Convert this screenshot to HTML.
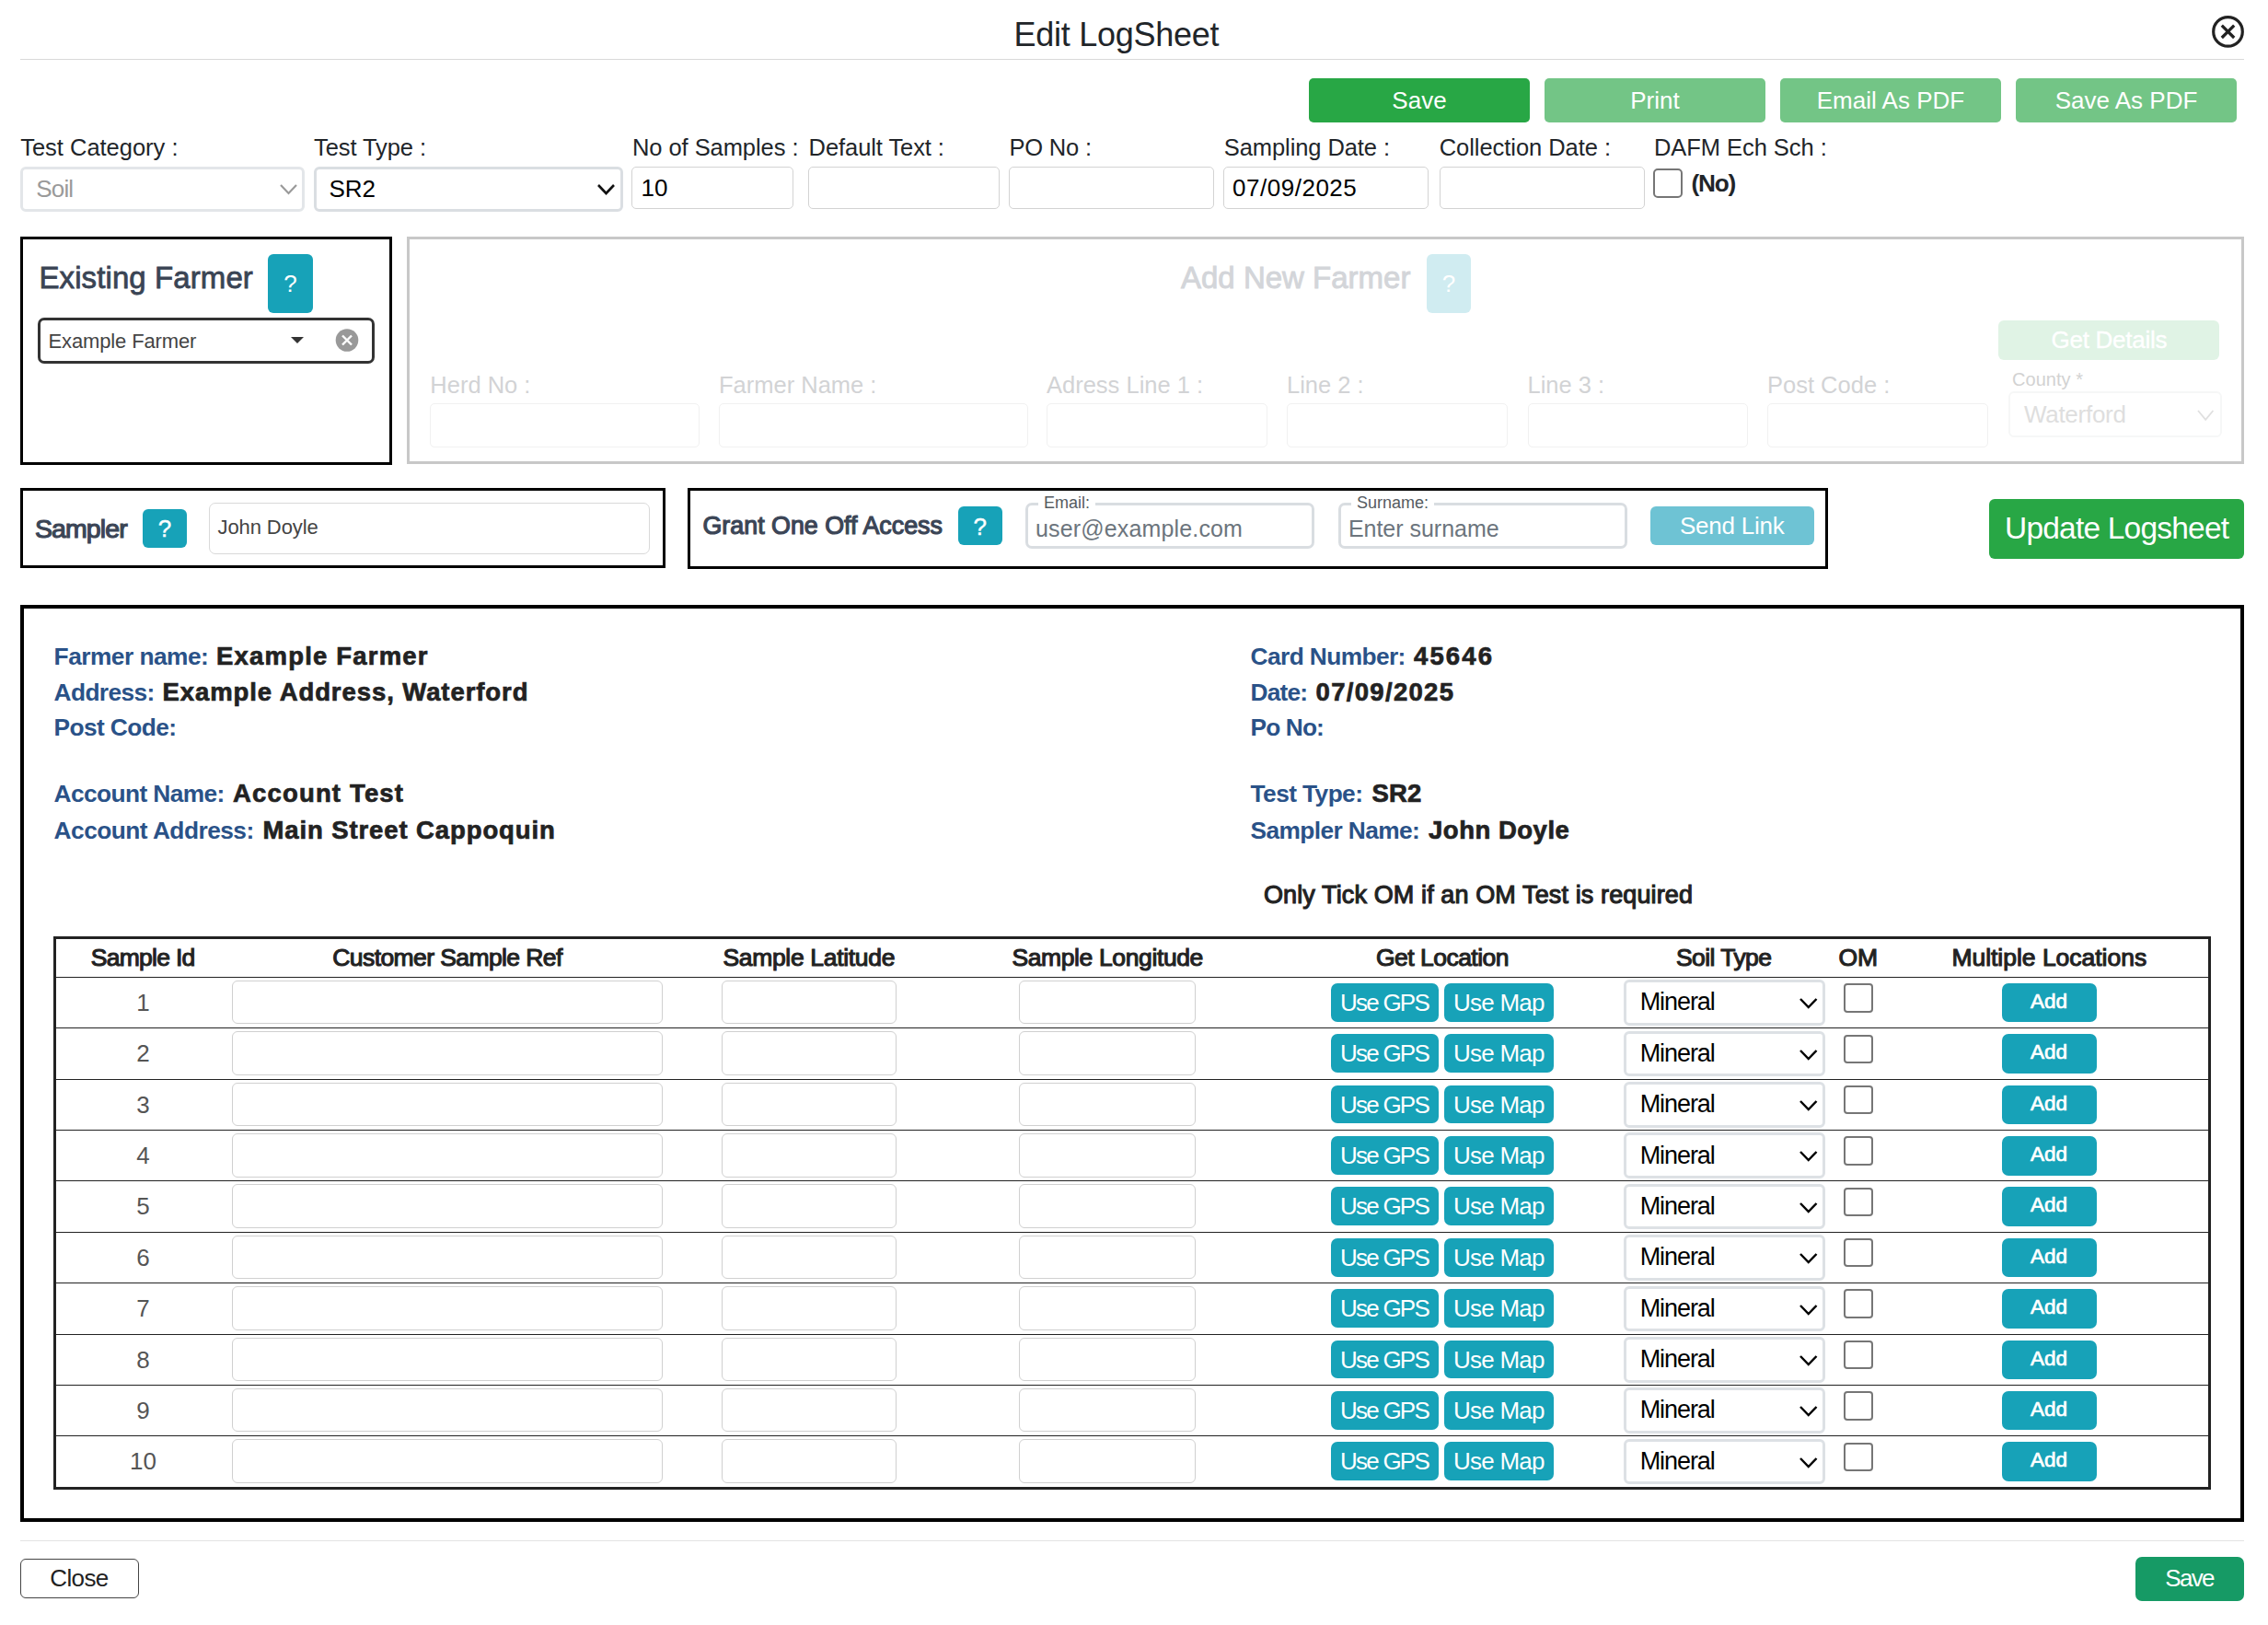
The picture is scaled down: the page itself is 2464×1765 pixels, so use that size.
<!DOCTYPE html>
<html><head><meta charset="utf-8"><title>Edit LogSheet</title>
<style>
html,body{margin:0;padding:0;background:#fff;width:2464px;height:1765px;overflow:hidden;position:relative}
body{font-family:"Liberation Sans",sans-serif}
.t{position:absolute;line-height:1;white-space:nowrap}
.b{position:absolute;box-sizing:border-box}
</style></head><body>
<div class="t" style="left:1101.40px;top:19.53px;font-size:36px;color:#212529;letter-spacing:-0.255px;">Edit LogSheet</div>
<svg class="b" style="left:2400px;top:14px" width="41" height="41"><circle cx="20.5" cy="20.4" r="15.8" fill="none" stroke="#222" stroke-width="3.2"/><path d="M13.8 13.6 L27.2 27.0 M27.2 13.6 L13.8 27.0" stroke="#222" stroke-width="3.2"/></svg>
<div class="b" style="left:22.00px;top:64.00px;width:2416.00px;height:1.00px;background:#d9d9d9;"></div>
<div class="b" style="left:1422.00px;top:85.00px;width:240.00px;height:48.00px;background:#28a745;border-radius:5px;"></div>
<div class="t" style="left:1512.36px;top:95.99px;font-size:26px;color:#fff;">Save</div>
<div class="b" style="left:1678.00px;top:85.00px;width:240.00px;height:48.00px;background:#73c586;border-radius:5px;"></div>
<div class="t" style="left:1771.29px;top:95.99px;font-size:26px;color:#fff;">Print</div>
<div class="b" style="left:1934.00px;top:85.00px;width:240.00px;height:48.00px;background:#73c586;border-radius:5px;"></div>
<div class="t" style="left:1973.79px;top:95.99px;font-size:26px;color:#fff;">Email As PDF</div>
<div class="b" style="left:2190.00px;top:85.00px;width:240.00px;height:48.00px;background:#73c586;border-radius:5px;"></div>
<div class="t" style="left:2232.72px;top:95.99px;font-size:26px;color:#fff;">Save As PDF</div>
<div class="t" style="left:22.20px;top:147.91px;font-size:25.5px;color:#212529;letter-spacing:-0.013px;">Test Category :</div>
<div class="t" style="left:341.00px;top:147.91px;font-size:25.5px;color:#212529;letter-spacing:-0.078px;">Test Type :</div>
<div class="t" style="left:687.00px;top:147.91px;font-size:25.5px;color:#212529;letter-spacing:-0.067px;">No of Samples :</div>
<div class="t" style="left:878.60px;top:147.91px;font-size:25.5px;color:#212529;letter-spacing:-0.078px;">Default Text :</div>
<div class="t" style="left:1096.50px;top:147.91px;font-size:25.5px;color:#212529;letter-spacing:-0.192px;">PO No :</div>
<div class="t" style="left:1329.80px;top:147.91px;font-size:25.5px;color:#212529;letter-spacing:-0.088px;">Sampling Date :</div>
<div class="t" style="left:1563.70px;top:147.91px;font-size:25.5px;color:#212529;letter-spacing:-0.046px;">Collection Date :</div>
<div class="t" style="left:1797.00px;top:147.91px;font-size:25.5px;color:#212529;letter-spacing:-0.057px;">DAFM Ech Sch :</div>
<div class="b" style="left:22.00px;top:181.00px;width:309.00px;height:49.00px;border:3px solid #e3e6e9;background:#fff;border-radius:6px;"></div>
<div class="t" style="left:39.20px;top:191.99px;font-size:26px;color:#9a9a9a;letter-spacing:-0.807px;">Soil</div>
<svg class="b" style="left:302.50px;top:199.00px" width="21.00" height="13.00"><polyline points="2,2 10.50,11.00 19.00,2" fill="none" stroke="#9a9a9a" stroke-width="2.2"/></svg>
<div class="b" style="left:341.00px;top:181.00px;width:335.50px;height:49.00px;border:3px solid #dadee2;background:#fff;border-radius:6px;"></div>
<div class="t" style="left:357.40px;top:191.99px;font-size:26px;color:#000;">SR2</div>
<svg class="b" style="left:648.40px;top:199.00px" width="21.00" height="13.00"><polyline points="2,2 10.50,11.00 19.00,2" fill="none" stroke="#111" stroke-width="2.6"/></svg>
<div class="b" style="left:686.00px;top:180.60px;width:176.00px;height:46.40px;border:1.2px solid #d3d3d3;background:#fff;border-radius:5px;"></div>
<div class="b" style="left:878.00px;top:180.60px;width:208.00px;height:46.40px;border:1.2px solid #d3d3d3;background:#fff;border-radius:5px;"></div>
<div class="b" style="left:1096.00px;top:180.60px;width:223.00px;height:46.40px;border:1.2px solid #d3d3d3;background:#fff;border-radius:5px;"></div>
<div class="b" style="left:1329.00px;top:180.60px;width:223.00px;height:46.40px;border:1.2px solid #d3d3d3;background:#fff;border-radius:5px;"></div>
<div class="b" style="left:1564.00px;top:180.60px;width:223.00px;height:46.40px;border:1.2px solid #d3d3d3;background:#fff;border-radius:5px;"></div>
<div class="t" style="left:696.50px;top:191.19px;font-size:26px;color:#000;">10</div>
<div class="t" style="left:1339.00px;top:191.19px;font-size:26px;color:#000;letter-spacing:0.519px;">07/09/2025</div>
<div class="b" style="left:1796.00px;top:183.00px;width:32.00px;height:32.00px;border:2px solid #767676;background:#fff;border-radius:5px;"></div>
<div class="t" style="left:1837.40px;top:185.62px;font-size:26.2px;color:#212529;font-weight:700;letter-spacing:-1.167px;">(No)</div>
<div class="b" style="left:22.00px;top:257.00px;width:404.00px;height:248.00px;border:3px solid #000;"></div>
<div class="t" style="left:42.50px;top:284.87px;font-size:33px;color:#3a4454;letter-spacing:0.093px;-webkit-text-stroke:0.8px #3a4454;">Existing Farmer</div>
<div class="b" style="left:291.00px;top:276.00px;width:49.00px;height:63.60px;background:#17a2b8;border-radius:6px;"></div>
<div class="t" style="left:308.29px;top:294.99px;font-size:26px;color:#fff;">?</div>
<div class="b" style="left:41.30px;top:345.00px;width:365.40px;height:50.00px;border:3px solid #333;background:#fff;border-radius:7px;"></div>
<div class="t" style="left:52.60px;top:360.38px;font-size:22px;color:#444;letter-spacing:-0.145px;">Example Farmer</div>
<svg class="b" style="left:315px;top:365px" width="16" height="10"><path d="M1 1 L15 1 L8 8 Z" fill="#333"/></svg>
<svg class="b" style="left:364px;top:357px" width="26" height="26"><circle cx="13" cy="12.5" r="12.3" fill="#999"/><path d="M8 7.5 L18 17.5 M18 7.5 L8 17.5" stroke="#fff" stroke-width="2.4"/></svg>
<div class="b" style="left:442.00px;top:257.00px;width:1996.00px;height:247.00px;border:3px solid #c8c8c8;"></div>
<div class="t" style="left:1283.00px;top:284.87px;font-size:33px;color:#d3d5d9;-webkit-text-stroke:0.9px #d3d5d9;">Add New Farmer</div>
<div class="b" style="left:1550.00px;top:276.00px;width:48.00px;height:64.00px;background:#d0ecf1;border-radius:6px;"></div>
<div class="t" style="left:1566.79px;top:294.99px;font-size:26px;color:#fff;">?</div>
<div class="b" style="left:2171.00px;top:348.00px;width:240.00px;height:43.00px;background:#e0f3e5;border-radius:6px;"></div>
<div class="t" style="left:2228.50px;top:355.99px;font-size:26px;color:#fff;letter-spacing:-0.267px;-webkit-text-stroke:0.4px #fff;">Get Details</div>
<div class="t" style="left:467.30px;top:406.41px;font-size:25.5px;color:#d2d3d5;">Herd No :</div>
<div class="b" style="left:467.00px;top:438.00px;width:293.00px;height:47.50px;border:1.2px solid #f1f1f1;border-radius:5px;"></div>
<div class="t" style="left:781.00px;top:406.41px;font-size:25.5px;color:#d2d3d5;">Farmer Name :</div>
<div class="b" style="left:781.00px;top:438.00px;width:336.00px;height:47.50px;border:1.2px solid #f1f1f1;border-radius:5px;"></div>
<div class="t" style="left:1137.00px;top:406.41px;font-size:25.5px;color:#d2d3d5;">Adress Line 1 :</div>
<div class="b" style="left:1137.00px;top:438.00px;width:240.00px;height:47.50px;border:1.2px solid #f1f1f1;border-radius:5px;"></div>
<div class="t" style="left:1398.00px;top:406.41px;font-size:25.5px;color:#d2d3d5;">Line 2 :</div>
<div class="b" style="left:1398.00px;top:438.00px;width:240.00px;height:47.50px;border:1.2px solid #f1f1f1;border-radius:5px;"></div>
<div class="t" style="left:1659.50px;top:406.41px;font-size:25.5px;color:#d2d3d5;">Line 3 :</div>
<div class="b" style="left:1659.50px;top:438.00px;width:239.50px;height:47.50px;border:1.2px solid #f1f1f1;border-radius:5px;"></div>
<div class="t" style="left:1920.00px;top:406.41px;font-size:25.5px;color:#d2d3d5;">Post Code :</div>
<div class="b" style="left:1920.00px;top:438.00px;width:240.00px;height:47.50px;border:1.2px solid #f1f1f1;border-radius:5px;"></div>
<div class="t" style="left:2186.00px;top:402.27px;font-size:20px;color:#d2d2d2;letter-spacing:0.043px;">County *</div>
<div class="b" style="left:2181.50px;top:425.00px;width:232.20px;height:50.00px;border:2.4px solid #f6f7f7;border-radius:6px;"></div>
<div class="t" style="left:2198.90px;top:437.09px;font-size:26px;color:#dedede;letter-spacing:-0.266px;">Waterford</div>
<svg class="b" style="left:2385.80px;top:443.50px" width="20.40" height="13.90"><polyline points="2,2 10.20,11.90 18.40,2" fill="none" stroke="#e0e0e0" stroke-width="1.8"/></svg>
<div class="b" style="left:22.00px;top:530.00px;width:701.00px;height:87.00px;border:3px solid #000;"></div>
<div class="t" style="left:38.00px;top:560.47px;font-size:28.5px;color:#3b4556;letter-spacing:-0.910px;-webkit-text-stroke:1.2px #3b4556;">Sampler</div>
<div class="b" style="left:155.00px;top:552.60px;width:48.00px;height:42.40px;background:#17a2b8;border-radius:6px;"></div>
<div class="t" style="left:171.78px;top:560.99px;font-size:26px;color:#fff;-webkit-text-stroke:0.4px #fff;">?</div>
<div class="b" style="left:227.40px;top:546.00px;width:478.60px;height:55.60px;border:1.2px solid #d9d9d9;background:#fff;border-radius:7px;"></div>
<div class="t" style="left:236.50px;top:562.38px;font-size:22px;color:#444;letter-spacing:-0.090px;">John Doyle</div>
<div class="b" style="left:747.00px;top:530.00px;width:1238.50px;height:87.50px;border:3px solid #000;"></div>
<div class="t" style="left:763.50px;top:558.31px;font-size:26.8px;color:#3b4556;letter-spacing:0.014px;-webkit-text-stroke:1.2px #3b4556;">Grant One Off Access</div>
<div class="b" style="left:1041.00px;top:550.00px;width:47.50px;height:42.40px;background:#17a2b8;border-radius:6px;"></div>
<div class="t" style="left:1057.49px;top:558.99px;font-size:26px;color:#fff;-webkit-text-stroke:0.4px #fff;">?</div>
<div class="b" style="left:1113.60px;top:546.30px;width:314.80px;height:50.10px;border:3px solid #d9dde1;background:#fff;border-radius:7px;"></div>
<div class="b" style="left:1128.00px;top:540.00px;width:62.04px;height:12.00px;background:#fff;"></div>
<div class="t" style="left:1134.00px;top:536.76px;font-size:18px;color:#555b61;">Email:</div>
<div class="t" style="left:1125.00px;top:562.44px;font-size:25px;color:#6c757d;letter-spacing:0.150px;">user@example.com</div>
<div class="b" style="left:1453.50px;top:546.30px;width:314.50px;height:50.10px;border:3px solid #d9dde1;background:#fff;border-radius:7px;"></div>
<div class="b" style="left:1468.00px;top:540.00px;width:90.03px;height:12.00px;background:#fff;"></div>
<div class="t" style="left:1474.00px;top:536.76px;font-size:18px;color:#555b61;">Surname:</div>
<div class="t" style="left:1464.90px;top:562.44px;font-size:25px;color:#6c757d;letter-spacing:-0.017px;">Enter surname</div>
<div class="b" style="left:1793.00px;top:550.00px;width:177.50px;height:42.00px;background:#6ec3d4;border-radius:6px;"></div>
<div class="t" style="left:1825.00px;top:557.99px;font-size:26px;color:#fff;letter-spacing:-0.241px;">Send Link</div>
<div class="b" style="left:2161.00px;top:542.00px;width:277.00px;height:65.00px;background:#28a745;border-radius:6px;"></div>
<div class="t" style="left:2178.00px;top:557.14px;font-size:33.5px;color:#fff;letter-spacing:-0.793px;">Update Logsheet</div>
<div class="b" style="left:22.00px;top:657.00px;width:2416.00px;height:996.00px;border:4px solid #000;"></div>
<div class="t" style="left:58.60px;top:700.44px;font-size:26.3px;color:#2a5288;font-weight:700;letter-spacing:-0.516px;">Farmer name:</div>
<div class="t" style="left:235.00px;top:699.42px;font-size:27.5px;color:#222;font-weight:700;letter-spacing:1.196px;-webkit-text-stroke:0.7px #222;">Example Farmer</div>
<div class="t" style="left:1358.60px;top:700.44px;font-size:26.3px;color:#2a5288;font-weight:700;letter-spacing:-0.602px;">Card Number:</div>
<div class="t" style="left:1536.00px;top:699.42px;font-size:27.5px;color:#222;font-weight:700;letter-spacing:2.137px;-webkit-text-stroke:0.7px #222;">45646</div>
<div class="t" style="left:58.60px;top:738.74px;font-size:26.3px;color:#2a5288;font-weight:700;letter-spacing:-0.630px;">Address:</div>
<div class="t" style="left:176.50px;top:737.72px;font-size:27.5px;color:#222;font-weight:700;letter-spacing:0.925px;-webkit-text-stroke:0.7px #222;">Example Address, Waterford</div>
<div class="t" style="left:1358.60px;top:738.74px;font-size:26.3px;color:#2a5288;font-weight:700;letter-spacing:-0.837px;">Date:</div>
<div class="t" style="left:1429.60px;top:737.72px;font-size:27.5px;color:#222;font-weight:700;letter-spacing:1.307px;-webkit-text-stroke:0.7px #222;">07/09/2025</div>
<div class="t" style="left:58.60px;top:777.34px;font-size:26.3px;color:#2a5288;font-weight:700;letter-spacing:-0.607px;">Post Code:</div>
<div class="t" style="left:1358.60px;top:777.34px;font-size:26.3px;color:#2a5288;font-weight:700;letter-spacing:-0.897px;">Po No:</div>
<div class="t" style="left:58.60px;top:849.24px;font-size:26.3px;color:#2a5288;font-weight:700;letter-spacing:-0.593px;">Account Name:</div>
<div class="t" style="left:253.00px;top:848.22px;font-size:27.5px;color:#222;font-weight:700;letter-spacing:1.168px;-webkit-text-stroke:0.7px #222;">Account Test</div>
<div class="t" style="left:1358.60px;top:849.24px;font-size:26.3px;color:#2a5288;font-weight:700;letter-spacing:-0.587px;">Test Type:</div>
<div class="t" style="left:1490.40px;top:848.22px;font-size:27.5px;color:#222;font-weight:700;letter-spacing:0.256px;-webkit-text-stroke:0.7px #222;">SR2</div>
<div class="t" style="left:58.60px;top:888.74px;font-size:26.3px;color:#2a5288;font-weight:700;letter-spacing:-0.528px;">Account Address:</div>
<div class="t" style="left:285.50px;top:887.72px;font-size:27.5px;color:#222;font-weight:700;letter-spacing:0.891px;-webkit-text-stroke:0.7px #222;">Main Street Cappoquin</div>
<div class="t" style="left:1358.60px;top:888.74px;font-size:26.3px;color:#2a5288;font-weight:700;letter-spacing:-0.605px;">Sampler Name:</div>
<div class="t" style="left:1552.00px;top:887.72px;font-size:27.5px;color:#222;font-weight:700;letter-spacing:0.519px;-webkit-text-stroke:0.7px #222;">John Doyle</div>
<div class="t" style="left:1373.00px;top:959.14px;font-size:27px;color:#222;letter-spacing:0.116px;-webkit-text-stroke:1.1px #222;">Only Tick OM if an OM Test is required</div>
<div class="b" style="left:58.00px;top:1017.00px;width:2344.00px;height:601.00px;border:3px solid #222;"></div>
<div class="t" style="left:98.70px;top:1026.57px;font-size:26.5px;color:#222;letter-spacing:-0.710px;-webkit-text-stroke:1.1px #222;">Sample Id</div>
<div class="t" style="left:361.30px;top:1026.57px;font-size:26.5px;color:#222;letter-spacing:-0.592px;-webkit-text-stroke:1.1px #222;">Customer Sample Ref</div>
<div class="t" style="left:785.40px;top:1026.57px;font-size:26.5px;color:#222;letter-spacing:-0.319px;-webkit-text-stroke:1.1px #222;">Sample Latitude</div>
<div class="t" style="left:1099.40px;top:1026.57px;font-size:26.5px;color:#222;letter-spacing:-0.379px;-webkit-text-stroke:1.1px #222;">Sample Longitude</div>
<div class="t" style="left:1495.00px;top:1026.57px;font-size:26.5px;color:#222;letter-spacing:-0.523px;-webkit-text-stroke:1.1px #222;">Get Location</div>
<div class="t" style="left:1821.00px;top:1026.57px;font-size:26.5px;color:#222;letter-spacing:-0.565px;-webkit-text-stroke:1.1px #222;">Soil Type</div>
<div class="t" style="left:1997.42px;top:1026.57px;font-size:26.5px;color:#222;-webkit-text-stroke:1.1px #222;">OM</div>
<div class="t" style="left:2120.40px;top:1026.57px;font-size:26.5px;color:#222;letter-spacing:-0.020px;-webkit-text-stroke:1.1px #222;">Multiple Locations</div>
<div class="b" style="left:61.00px;top:1061.00px;width:2338.00px;height:1.00px;background:#222;"></div>
<div class="t" style="left:148.28px;top:1075.99px;font-size:26px;color:#555;">1</div>
<div class="b" style="left:252.00px;top:1065.00px;width:468.00px;height:47.40px;border:1.2px solid #d0d0d0;background:#fff;border-radius:6px;"></div>
<div class="b" style="left:783.50px;top:1065.00px;width:190.80px;height:47.40px;border:1.2px solid #d0d0d0;background:#fff;border-radius:6px;"></div>
<div class="b" style="left:1107.30px;top:1065.00px;width:191.40px;height:47.40px;border:1.2px solid #d0d0d0;background:#fff;border-radius:6px;"></div>
<div class="b" style="left:1446.00px;top:1068.00px;width:116.80px;height:41.70px;background:#17a2b8;border-radius:7px;"></div>
<div class="t" style="left:1456.00px;top:1075.99px;font-size:26px;color:#fff;letter-spacing:-1.770px;">Use GPS</div>
<div class="b" style="left:1569.00px;top:1068.00px;width:118.80px;height:41.70px;background:#17a2b8;border-radius:7px;"></div>
<div class="t" style="left:1579.00px;top:1075.99px;font-size:26px;color:#fff;letter-spacing:-0.750px;">Use Map</div>
<div class="b" style="left:1764.30px;top:1064.30px;width:218.50px;height:49.70px;border:3px solid #dde1e5;background:#fff;border-radius:6px;"></div>
<div class="t" style="left:1781.70px;top:1075.44px;font-size:27px;color:#000;letter-spacing:-1.077px;">Mineral</div>
<svg class="b" style="left:1954.00px;top:1083.30px" width="21.50" height="13.00"><polyline points="2,2 10.75,11.00 19.50,2" fill="none" stroke="#000" stroke-width="2.5"/></svg>
<div class="b" style="left:2003.30px;top:1068.20px;width:31.40px;height:31.40px;border:2px solid #767676;background:#fff;border-radius:4px;"></div>
<div class="b" style="left:2175.00px;top:1068.00px;width:102.80px;height:42.40px;background:#17a2b8;border-radius:7px;"></div>
<div class="t" style="left:2205.97px;top:1076.95px;font-size:22.5px;color:#fff;-webkit-text-stroke:0.7px #fff;">Add</div>
<div class="b" style="left:61.00px;top:1116.00px;width:2338.00px;height:1.00px;background:#222;"></div>
<div class="t" style="left:148.28px;top:1131.36px;font-size:26px;color:#555;">2</div>
<div class="b" style="left:252.00px;top:1120.37px;width:468.00px;height:47.40px;border:1.2px solid #d0d0d0;background:#fff;border-radius:6px;"></div>
<div class="b" style="left:783.50px;top:1120.37px;width:190.80px;height:47.40px;border:1.2px solid #d0d0d0;background:#fff;border-radius:6px;"></div>
<div class="b" style="left:1107.30px;top:1120.37px;width:191.40px;height:47.40px;border:1.2px solid #d0d0d0;background:#fff;border-radius:6px;"></div>
<div class="b" style="left:1446.00px;top:1123.37px;width:116.80px;height:41.70px;background:#17a2b8;border-radius:7px;"></div>
<div class="t" style="left:1456.00px;top:1131.36px;font-size:26px;color:#fff;letter-spacing:-1.770px;">Use GPS</div>
<div class="b" style="left:1569.00px;top:1123.37px;width:118.80px;height:41.70px;background:#17a2b8;border-radius:7px;"></div>
<div class="t" style="left:1579.00px;top:1131.36px;font-size:26px;color:#fff;letter-spacing:-0.750px;">Use Map</div>
<div class="b" style="left:1764.30px;top:1119.67px;width:218.50px;height:49.70px;border:3px solid #dde1e5;background:#fff;border-radius:6px;"></div>
<div class="t" style="left:1781.70px;top:1130.81px;font-size:27px;color:#000;letter-spacing:-1.077px;">Mineral</div>
<svg class="b" style="left:1954.00px;top:1138.67px" width="21.50" height="13.00"><polyline points="2,2 10.75,11.00 19.50,2" fill="none" stroke="#000" stroke-width="2.5"/></svg>
<div class="b" style="left:2003.30px;top:1123.57px;width:31.40px;height:31.40px;border:2px solid #767676;background:#fff;border-radius:4px;"></div>
<div class="b" style="left:2175.00px;top:1123.37px;width:102.80px;height:42.40px;background:#17a2b8;border-radius:7px;"></div>
<div class="t" style="left:2205.97px;top:1132.32px;font-size:22.5px;color:#fff;-webkit-text-stroke:0.7px #fff;">Add</div>
<div class="b" style="left:61.00px;top:1172.00px;width:2338.00px;height:1.00px;background:#222;"></div>
<div class="t" style="left:148.28px;top:1186.73px;font-size:26px;color:#555;">3</div>
<div class="b" style="left:252.00px;top:1175.74px;width:468.00px;height:47.40px;border:1.2px solid #d0d0d0;background:#fff;border-radius:6px;"></div>
<div class="b" style="left:783.50px;top:1175.74px;width:190.80px;height:47.40px;border:1.2px solid #d0d0d0;background:#fff;border-radius:6px;"></div>
<div class="b" style="left:1107.30px;top:1175.74px;width:191.40px;height:47.40px;border:1.2px solid #d0d0d0;background:#fff;border-radius:6px;"></div>
<div class="b" style="left:1446.00px;top:1178.74px;width:116.80px;height:41.70px;background:#17a2b8;border-radius:7px;"></div>
<div class="t" style="left:1456.00px;top:1186.73px;font-size:26px;color:#fff;letter-spacing:-1.770px;">Use GPS</div>
<div class="b" style="left:1569.00px;top:1178.74px;width:118.80px;height:41.70px;background:#17a2b8;border-radius:7px;"></div>
<div class="t" style="left:1579.00px;top:1186.73px;font-size:26px;color:#fff;letter-spacing:-0.750px;">Use Map</div>
<div class="b" style="left:1764.30px;top:1175.04px;width:218.50px;height:49.70px;border:3px solid #dde1e5;background:#fff;border-radius:6px;"></div>
<div class="t" style="left:1781.70px;top:1186.18px;font-size:27px;color:#000;letter-spacing:-1.077px;">Mineral</div>
<svg class="b" style="left:1954.00px;top:1194.04px" width="21.50" height="13.00"><polyline points="2,2 10.75,11.00 19.50,2" fill="none" stroke="#000" stroke-width="2.5"/></svg>
<div class="b" style="left:2003.30px;top:1178.94px;width:31.40px;height:31.40px;border:2px solid #767676;background:#fff;border-radius:4px;"></div>
<div class="b" style="left:2175.00px;top:1178.74px;width:102.80px;height:42.40px;background:#17a2b8;border-radius:7px;"></div>
<div class="t" style="left:2205.97px;top:1187.69px;font-size:22.5px;color:#fff;-webkit-text-stroke:0.7px #fff;">Add</div>
<div class="b" style="left:61.00px;top:1227.00px;width:2338.00px;height:1.00px;background:#222;"></div>
<div class="t" style="left:148.28px;top:1242.10px;font-size:26px;color:#555;">4</div>
<div class="b" style="left:252.00px;top:1231.11px;width:468.00px;height:47.40px;border:1.2px solid #d0d0d0;background:#fff;border-radius:6px;"></div>
<div class="b" style="left:783.50px;top:1231.11px;width:190.80px;height:47.40px;border:1.2px solid #d0d0d0;background:#fff;border-radius:6px;"></div>
<div class="b" style="left:1107.30px;top:1231.11px;width:191.40px;height:47.40px;border:1.2px solid #d0d0d0;background:#fff;border-radius:6px;"></div>
<div class="b" style="left:1446.00px;top:1234.11px;width:116.80px;height:41.70px;background:#17a2b8;border-radius:7px;"></div>
<div class="t" style="left:1456.00px;top:1242.10px;font-size:26px;color:#fff;letter-spacing:-1.770px;">Use GPS</div>
<div class="b" style="left:1569.00px;top:1234.11px;width:118.80px;height:41.70px;background:#17a2b8;border-radius:7px;"></div>
<div class="t" style="left:1579.00px;top:1242.10px;font-size:26px;color:#fff;letter-spacing:-0.750px;">Use Map</div>
<div class="b" style="left:1764.30px;top:1230.41px;width:218.50px;height:49.70px;border:3px solid #dde1e5;background:#fff;border-radius:6px;"></div>
<div class="t" style="left:1781.70px;top:1241.55px;font-size:27px;color:#000;letter-spacing:-1.077px;">Mineral</div>
<svg class="b" style="left:1954.00px;top:1249.41px" width="21.50" height="13.00"><polyline points="2,2 10.75,11.00 19.50,2" fill="none" stroke="#000" stroke-width="2.5"/></svg>
<div class="b" style="left:2003.30px;top:1234.31px;width:31.40px;height:31.40px;border:2px solid #767676;background:#fff;border-radius:4px;"></div>
<div class="b" style="left:2175.00px;top:1234.11px;width:102.80px;height:42.40px;background:#17a2b8;border-radius:7px;"></div>
<div class="t" style="left:2205.97px;top:1243.06px;font-size:22.5px;color:#fff;-webkit-text-stroke:0.7px #fff;">Add</div>
<div class="b" style="left:61.00px;top:1282.00px;width:2338.00px;height:1.00px;background:#222;"></div>
<div class="t" style="left:148.28px;top:1297.47px;font-size:26px;color:#555;">5</div>
<div class="b" style="left:252.00px;top:1286.48px;width:468.00px;height:47.40px;border:1.2px solid #d0d0d0;background:#fff;border-radius:6px;"></div>
<div class="b" style="left:783.50px;top:1286.48px;width:190.80px;height:47.40px;border:1.2px solid #d0d0d0;background:#fff;border-radius:6px;"></div>
<div class="b" style="left:1107.30px;top:1286.48px;width:191.40px;height:47.40px;border:1.2px solid #d0d0d0;background:#fff;border-radius:6px;"></div>
<div class="b" style="left:1446.00px;top:1289.48px;width:116.80px;height:41.70px;background:#17a2b8;border-radius:7px;"></div>
<div class="t" style="left:1456.00px;top:1297.47px;font-size:26px;color:#fff;letter-spacing:-1.770px;">Use GPS</div>
<div class="b" style="left:1569.00px;top:1289.48px;width:118.80px;height:41.70px;background:#17a2b8;border-radius:7px;"></div>
<div class="t" style="left:1579.00px;top:1297.47px;font-size:26px;color:#fff;letter-spacing:-0.750px;">Use Map</div>
<div class="b" style="left:1764.30px;top:1285.78px;width:218.50px;height:49.70px;border:3px solid #dde1e5;background:#fff;border-radius:6px;"></div>
<div class="t" style="left:1781.70px;top:1296.92px;font-size:27px;color:#000;letter-spacing:-1.077px;">Mineral</div>
<svg class="b" style="left:1954.00px;top:1304.78px" width="21.50" height="13.00"><polyline points="2,2 10.75,11.00 19.50,2" fill="none" stroke="#000" stroke-width="2.5"/></svg>
<div class="b" style="left:2003.30px;top:1289.68px;width:31.40px;height:31.40px;border:2px solid #767676;background:#fff;border-radius:4px;"></div>
<div class="b" style="left:2175.00px;top:1289.48px;width:102.80px;height:42.40px;background:#17a2b8;border-radius:7px;"></div>
<div class="t" style="left:2205.97px;top:1298.43px;font-size:22.5px;color:#fff;-webkit-text-stroke:0.7px #fff;">Add</div>
<div class="b" style="left:61.00px;top:1338.00px;width:2338.00px;height:1.00px;background:#222;"></div>
<div class="t" style="left:148.28px;top:1352.84px;font-size:26px;color:#555;">6</div>
<div class="b" style="left:252.00px;top:1341.85px;width:468.00px;height:47.40px;border:1.2px solid #d0d0d0;background:#fff;border-radius:6px;"></div>
<div class="b" style="left:783.50px;top:1341.85px;width:190.80px;height:47.40px;border:1.2px solid #d0d0d0;background:#fff;border-radius:6px;"></div>
<div class="b" style="left:1107.30px;top:1341.85px;width:191.40px;height:47.40px;border:1.2px solid #d0d0d0;background:#fff;border-radius:6px;"></div>
<div class="b" style="left:1446.00px;top:1344.85px;width:116.80px;height:41.70px;background:#17a2b8;border-radius:7px;"></div>
<div class="t" style="left:1456.00px;top:1352.84px;font-size:26px;color:#fff;letter-spacing:-1.770px;">Use GPS</div>
<div class="b" style="left:1569.00px;top:1344.85px;width:118.80px;height:41.70px;background:#17a2b8;border-radius:7px;"></div>
<div class="t" style="left:1579.00px;top:1352.84px;font-size:26px;color:#fff;letter-spacing:-0.750px;">Use Map</div>
<div class="b" style="left:1764.30px;top:1341.15px;width:218.50px;height:49.70px;border:3px solid #dde1e5;background:#fff;border-radius:6px;"></div>
<div class="t" style="left:1781.70px;top:1352.29px;font-size:27px;color:#000;letter-spacing:-1.077px;">Mineral</div>
<svg class="b" style="left:1954.00px;top:1360.15px" width="21.50" height="13.00"><polyline points="2,2 10.75,11.00 19.50,2" fill="none" stroke="#000" stroke-width="2.5"/></svg>
<div class="b" style="left:2003.30px;top:1345.05px;width:31.40px;height:31.40px;border:2px solid #767676;background:#fff;border-radius:4px;"></div>
<div class="b" style="left:2175.00px;top:1344.85px;width:102.80px;height:42.40px;background:#17a2b8;border-radius:7px;"></div>
<div class="t" style="left:2205.97px;top:1353.80px;font-size:22.5px;color:#fff;-webkit-text-stroke:0.7px #fff;">Add</div>
<div class="b" style="left:61.00px;top:1393.00px;width:2338.00px;height:1.00px;background:#222;"></div>
<div class="t" style="left:148.28px;top:1408.21px;font-size:26px;color:#555;">7</div>
<div class="b" style="left:252.00px;top:1397.22px;width:468.00px;height:47.40px;border:1.2px solid #d0d0d0;background:#fff;border-radius:6px;"></div>
<div class="b" style="left:783.50px;top:1397.22px;width:190.80px;height:47.40px;border:1.2px solid #d0d0d0;background:#fff;border-radius:6px;"></div>
<div class="b" style="left:1107.30px;top:1397.22px;width:191.40px;height:47.40px;border:1.2px solid #d0d0d0;background:#fff;border-radius:6px;"></div>
<div class="b" style="left:1446.00px;top:1400.22px;width:116.80px;height:41.70px;background:#17a2b8;border-radius:7px;"></div>
<div class="t" style="left:1456.00px;top:1408.21px;font-size:26px;color:#fff;letter-spacing:-1.770px;">Use GPS</div>
<div class="b" style="left:1569.00px;top:1400.22px;width:118.80px;height:41.70px;background:#17a2b8;border-radius:7px;"></div>
<div class="t" style="left:1579.00px;top:1408.21px;font-size:26px;color:#fff;letter-spacing:-0.750px;">Use Map</div>
<div class="b" style="left:1764.30px;top:1396.52px;width:218.50px;height:49.70px;border:3px solid #dde1e5;background:#fff;border-radius:6px;"></div>
<div class="t" style="left:1781.70px;top:1407.66px;font-size:27px;color:#000;letter-spacing:-1.077px;">Mineral</div>
<svg class="b" style="left:1954.00px;top:1415.52px" width="21.50" height="13.00"><polyline points="2,2 10.75,11.00 19.50,2" fill="none" stroke="#000" stroke-width="2.5"/></svg>
<div class="b" style="left:2003.30px;top:1400.42px;width:31.40px;height:31.40px;border:2px solid #767676;background:#fff;border-radius:4px;"></div>
<div class="b" style="left:2175.00px;top:1400.22px;width:102.80px;height:42.40px;background:#17a2b8;border-radius:7px;"></div>
<div class="t" style="left:2205.97px;top:1409.17px;font-size:22.5px;color:#fff;-webkit-text-stroke:0.7px #fff;">Add</div>
<div class="b" style="left:61.00px;top:1449.00px;width:2338.00px;height:1.00px;background:#222;"></div>
<div class="t" style="left:148.28px;top:1463.58px;font-size:26px;color:#555;">8</div>
<div class="b" style="left:252.00px;top:1452.59px;width:468.00px;height:47.40px;border:1.2px solid #d0d0d0;background:#fff;border-radius:6px;"></div>
<div class="b" style="left:783.50px;top:1452.59px;width:190.80px;height:47.40px;border:1.2px solid #d0d0d0;background:#fff;border-radius:6px;"></div>
<div class="b" style="left:1107.30px;top:1452.59px;width:191.40px;height:47.40px;border:1.2px solid #d0d0d0;background:#fff;border-radius:6px;"></div>
<div class="b" style="left:1446.00px;top:1455.59px;width:116.80px;height:41.70px;background:#17a2b8;border-radius:7px;"></div>
<div class="t" style="left:1456.00px;top:1463.58px;font-size:26px;color:#fff;letter-spacing:-1.770px;">Use GPS</div>
<div class="b" style="left:1569.00px;top:1455.59px;width:118.80px;height:41.70px;background:#17a2b8;border-radius:7px;"></div>
<div class="t" style="left:1579.00px;top:1463.58px;font-size:26px;color:#fff;letter-spacing:-0.750px;">Use Map</div>
<div class="b" style="left:1764.30px;top:1451.89px;width:218.50px;height:49.70px;border:3px solid #dde1e5;background:#fff;border-radius:6px;"></div>
<div class="t" style="left:1781.70px;top:1463.03px;font-size:27px;color:#000;letter-spacing:-1.077px;">Mineral</div>
<svg class="b" style="left:1954.00px;top:1470.89px" width="21.50" height="13.00"><polyline points="2,2 10.75,11.00 19.50,2" fill="none" stroke="#000" stroke-width="2.5"/></svg>
<div class="b" style="left:2003.30px;top:1455.79px;width:31.40px;height:31.40px;border:2px solid #767676;background:#fff;border-radius:4px;"></div>
<div class="b" style="left:2175.00px;top:1455.59px;width:102.80px;height:42.40px;background:#17a2b8;border-radius:7px;"></div>
<div class="t" style="left:2205.97px;top:1464.54px;font-size:22.5px;color:#fff;-webkit-text-stroke:0.7px #fff;">Add</div>
<div class="b" style="left:61.00px;top:1504.00px;width:2338.00px;height:1.00px;background:#222;"></div>
<div class="t" style="left:148.28px;top:1518.95px;font-size:26px;color:#555;">9</div>
<div class="b" style="left:252.00px;top:1507.96px;width:468.00px;height:47.40px;border:1.2px solid #d0d0d0;background:#fff;border-radius:6px;"></div>
<div class="b" style="left:783.50px;top:1507.96px;width:190.80px;height:47.40px;border:1.2px solid #d0d0d0;background:#fff;border-radius:6px;"></div>
<div class="b" style="left:1107.30px;top:1507.96px;width:191.40px;height:47.40px;border:1.2px solid #d0d0d0;background:#fff;border-radius:6px;"></div>
<div class="b" style="left:1446.00px;top:1510.96px;width:116.80px;height:41.70px;background:#17a2b8;border-radius:7px;"></div>
<div class="t" style="left:1456.00px;top:1518.95px;font-size:26px;color:#fff;letter-spacing:-1.770px;">Use GPS</div>
<div class="b" style="left:1569.00px;top:1510.96px;width:118.80px;height:41.70px;background:#17a2b8;border-radius:7px;"></div>
<div class="t" style="left:1579.00px;top:1518.95px;font-size:26px;color:#fff;letter-spacing:-0.750px;">Use Map</div>
<div class="b" style="left:1764.30px;top:1507.26px;width:218.50px;height:49.70px;border:3px solid #dde1e5;background:#fff;border-radius:6px;"></div>
<div class="t" style="left:1781.70px;top:1518.40px;font-size:27px;color:#000;letter-spacing:-1.077px;">Mineral</div>
<svg class="b" style="left:1954.00px;top:1526.26px" width="21.50" height="13.00"><polyline points="2,2 10.75,11.00 19.50,2" fill="none" stroke="#000" stroke-width="2.5"/></svg>
<div class="b" style="left:2003.30px;top:1511.16px;width:31.40px;height:31.40px;border:2px solid #767676;background:#fff;border-radius:4px;"></div>
<div class="b" style="left:2175.00px;top:1510.96px;width:102.80px;height:42.40px;background:#17a2b8;border-radius:7px;"></div>
<div class="t" style="left:2205.97px;top:1519.91px;font-size:22.5px;color:#fff;-webkit-text-stroke:0.7px #fff;">Add</div>
<div class="b" style="left:61.00px;top:1559.00px;width:2338.00px;height:1.00px;background:#222;"></div>
<div class="t" style="left:141.07px;top:1574.32px;font-size:26px;color:#555;">10</div>
<div class="b" style="left:252.00px;top:1563.33px;width:468.00px;height:47.40px;border:1.2px solid #d0d0d0;background:#fff;border-radius:6px;"></div>
<div class="b" style="left:783.50px;top:1563.33px;width:190.80px;height:47.40px;border:1.2px solid #d0d0d0;background:#fff;border-radius:6px;"></div>
<div class="b" style="left:1107.30px;top:1563.33px;width:191.40px;height:47.40px;border:1.2px solid #d0d0d0;background:#fff;border-radius:6px;"></div>
<div class="b" style="left:1446.00px;top:1566.33px;width:116.80px;height:41.70px;background:#17a2b8;border-radius:7px;"></div>
<div class="t" style="left:1456.00px;top:1574.32px;font-size:26px;color:#fff;letter-spacing:-1.770px;">Use GPS</div>
<div class="b" style="left:1569.00px;top:1566.33px;width:118.80px;height:41.70px;background:#17a2b8;border-radius:7px;"></div>
<div class="t" style="left:1579.00px;top:1574.32px;font-size:26px;color:#fff;letter-spacing:-0.750px;">Use Map</div>
<div class="b" style="left:1764.30px;top:1562.63px;width:218.50px;height:49.70px;border:3px solid #dde1e5;background:#fff;border-radius:6px;"></div>
<div class="t" style="left:1781.70px;top:1573.77px;font-size:27px;color:#000;letter-spacing:-1.077px;">Mineral</div>
<svg class="b" style="left:1954.00px;top:1581.63px" width="21.50" height="13.00"><polyline points="2,2 10.75,11.00 19.50,2" fill="none" stroke="#000" stroke-width="2.5"/></svg>
<div class="b" style="left:2003.30px;top:1566.53px;width:31.40px;height:31.40px;border:2px solid #767676;background:#fff;border-radius:4px;"></div>
<div class="b" style="left:2175.00px;top:1566.33px;width:102.80px;height:42.40px;background:#17a2b8;border-radius:7px;"></div>
<div class="t" style="left:2205.97px;top:1575.28px;font-size:22.5px;color:#fff;-webkit-text-stroke:0.7px #fff;">Add</div>
<div class="b" style="left:22.00px;top:1673.00px;width:2416.00px;height:1.00px;background:#e3e3e3;"></div>
<div class="b" style="left:22.00px;top:1693.00px;width:129.00px;height:43.00px;border:1.3px solid #444;background:#fff;border-radius:6px;"></div>
<div class="t" style="left:54.30px;top:1700.79px;font-size:26px;color:#222;letter-spacing:-0.633px;">Close</div>
<div class="b" style="left:2320.00px;top:1691.00px;width:118.00px;height:48.00px;background:#169a65;border-radius:7px;"></div>
<div class="t" style="left:2352.30px;top:1700.89px;font-size:26px;color:#fff;letter-spacing:-1.727px;">Save</div>
</body></html>
